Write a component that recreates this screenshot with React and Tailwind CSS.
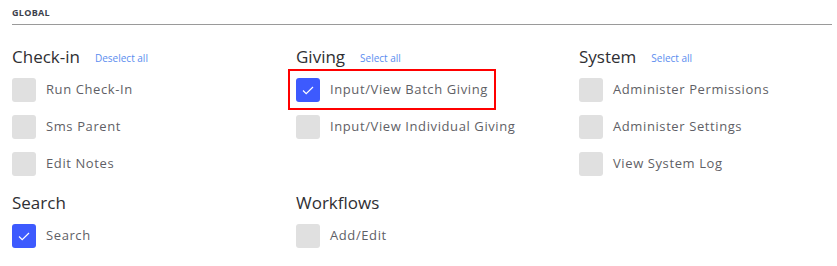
// App.jsx
const FONT = { fontFamily: '"Open Sans", "Liberation Sans", sans-serif' };

const GROUPS = [
  [
    {
      title: 'Check-in',
      action: 'Deselect all',
      items: [
        { label: 'Run Check-In' },
        { label: 'Sms Parent' },
        { label: 'Edit Notes' },
      ],
    },
    {
      title: 'Giving',
      action: 'Select all',
      items: [
        { label: 'Input/View Batch Giving', checked: true, marked: true },
        { label: 'Input/View Individual Giving' },
      ],
    },
    {
      title: 'System',
      action: 'Select all',
      items: [
        { label: 'Administer Permissions' },
        { label: 'Administer Settings' },
        { label: 'View System Log' },
      ],
    },
  ],
  [
    { title: 'Search', items: [{ label: 'Search', checked: true }] },
    { title: 'Workflows', items: [{ label: 'Add/Edit' }] },
  ],
];

function Checkbox({ checked }) {
  if (!checked) {
    return <span className="block w-6 h-6 rounded-[3px] bg-[#e0e0e0] shrink-0" />;
  }
  return (
    <span className="flex items-center justify-center w-6 h-6 rounded-[3px] bg-[#3d5afe] shrink-0">
      <svg width="12" height="9" viewBox="0 0 12 9" fill="none">
        <path d="M1 4.5 L4.2 7.6 L11 1" stroke="white" strokeWidth="1.2" />
      </svg>
    </span>
  );
}

function Item({ label, checked, marked }) {
  return (
    <div className="relative inline-flex items-center gap-[10px] self-start">
      <Checkbox checked={checked} />
      <span className="text-[13px] text-[#5f5f66] tracking-[0.6px]">{label}</span>
      {marked && (
        <span className="absolute -left-2 -top-[9px] -right-2 -bottom-2 border-2 border-[#ff0000] pointer-events-none" />
      )}
    </div>
  );
}

function Group({ title, action, items }) {
  return (
    <div className="flex flex-col">
      <div className="flex items-center h-[22px]">
        <h3 className="text-[17px] leading-[22px] text-[#2f2f33]">{title}</h3>
        {action && (
          <span className="ml-[15px] mt-[3px] text-[10px] text-[#5b8def]">{action}</span>
        )}
      </div>
      <div className="flex flex-col gap-[13px] mt-[10px]">
        {items.map((it) => (
          <Item key={it.label} {...it} />
        ))}
      </div>
    </div>
  );
}

export default function App() {
  return (
    <div className="w-[837px] h-[266px] bg-white pl-3 pr-[5px] pt-[7px]" style={FONT}>
      <div className="text-[9px] font-bold tracking-[0.3px] text-[#3c3f4d] leading-[12px]">GLOBAL</div>
      <div className="h-px bg-[#9a9a9a] mt-[5px]" />
      <div className="grid grid-cols-[284px_283px_1fr] mt-[21px]">
        {GROUPS[0].map((g) => (
          <Group key={g.title} {...g} />
        ))}
      </div>
      <div className="grid grid-cols-[284px_283px_1fr] mt-4">
        {GROUPS[1].map((g) => (
          <Group key={g.title} {...g} />
        ))}
      </div>
    </div>
  );
}
